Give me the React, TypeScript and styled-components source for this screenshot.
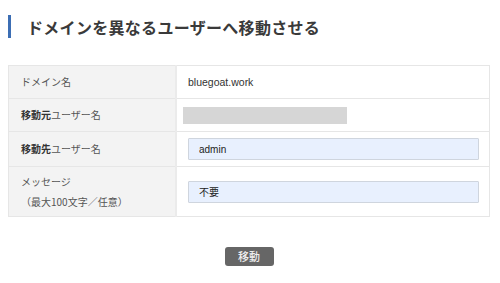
import React from "react";
import styled, { createGlobalStyle } from "styled-components";

const Global = createGlobalStyle`
  html, body { margin: 0; padding: 0; background: #fff; }
  body {
    font-family: "Liberation Sans", "Noto Sans CJK JP", sans-serif;
    color: #333;
  }
`;

const Page = styled.div`
  padding: 15px 10px 0 8px;
  width: 500px;
  box-sizing: border-box;
`;

const Heading = styled.h1`
  margin: 0;
  height: 23px;
  border-left: 3px solid #3c6eb4;
  padding-left: 16px;
  display: flex;
  align-items: center;
  font-family: "Noto Sans CJK JP", sans-serif;
  font-size: 16px;
  font-weight: 700;
  color: #3a3a3a;
  letter-spacing: 0.3px;
`;

const Table = styled.table`
  margin-top: 27px;
  width: 482px;
  border-collapse: collapse;
  border: 1px solid #e6e6e6;
`;

const Row = styled.tr<{ $h: number }>`
  height: ${(p) => p.$h}px;
`;

const Label = styled.th`
  width: 154px;
  background: #f3f3f3;
  border: 1px solid #e6e6e6;
  border-right: 2px solid #ebebeb;
  padding: 0 0 0 12px;
  text-align: left;
  vertical-align: middle;
  font-family: "Noto Sans CJK JP", sans-serif;
  font-size: 10px;
  font-weight: 400;
  color: #555;
  line-height: 20px;
`;

const Strong = styled.span`
  font-weight: 700;
  color: #333;
`;

const Value = styled.td`
  border: 1px solid #e6e6e6;
  padding: 0 0 0 11px;
  vertical-align: middle;
  font-size: 10.5px;
  color: #333;
`;

const Redacted = styled.div`
  margin-left: -5px;
  width: 164px;
  height: 17px;
  background: #d6d6d6;
`;

const Field = styled.input`
  box-sizing: border-box;
  width: 291px;
  height: 22px;
  margin: 0;
  padding: 0 10px;
  background: #e8f0fe;
  border: 1px solid #cfd5de;
  border-radius: 1px;
  font-family: "Liberation Sans", "Noto Sans CJK JP", sans-serif;
  font-size: 10px;
  color: #222;
  outline: none;
`;

const Actions = styled.div`
  display: flex;
  justify-content: center;
  padding: 30px 0 0 0;
  width: 482px;
`;

const Button = styled.button`
  width: 49px;
  height: 19px;
  padding: 0;
  background: #666;
  border: none;
  border-radius: 3px;
  color: #eee;
  font-family: "Noto Sans CJK JP", sans-serif;
  font-size: 11px;
  font-weight: 500;
  line-height: 19px;
  cursor: pointer;
`;

export default function App() {
  return (
    <>
      <Global />
      <Page>
        <Heading>ドメインを異なるユーザーへ移動させる</Heading>
        <Table>
          <tbody>
            <Row $h={33}>
              <Label>ドメイン名</Label>
              <Value>bluegoat.work</Value>
            </Row>
            <Row $h={33}>
              <Label>
                <Strong>移動元</Strong>ユーザー名
              </Label>
              <Value>
                <Redacted />
              </Value>
            </Row>
            <Row $h={35}>
              <Label>
                <Strong>移動先</Strong>ユーザー名
              </Label>
              <Value>
                <Field defaultValue="admin" />
              </Value>
            </Row>
            <Row $h={50}>
              <Label>
                メッセージ
                <br />
                （最大100文字／任意）
              </Label>
              <Value>
                <Field defaultValue="不要" />
              </Value>
            </Row>
          </tbody>
        </Table>
        <Actions>
          <Button>移動</Button>
        </Actions>
      </Page>
    </>
  );
}
